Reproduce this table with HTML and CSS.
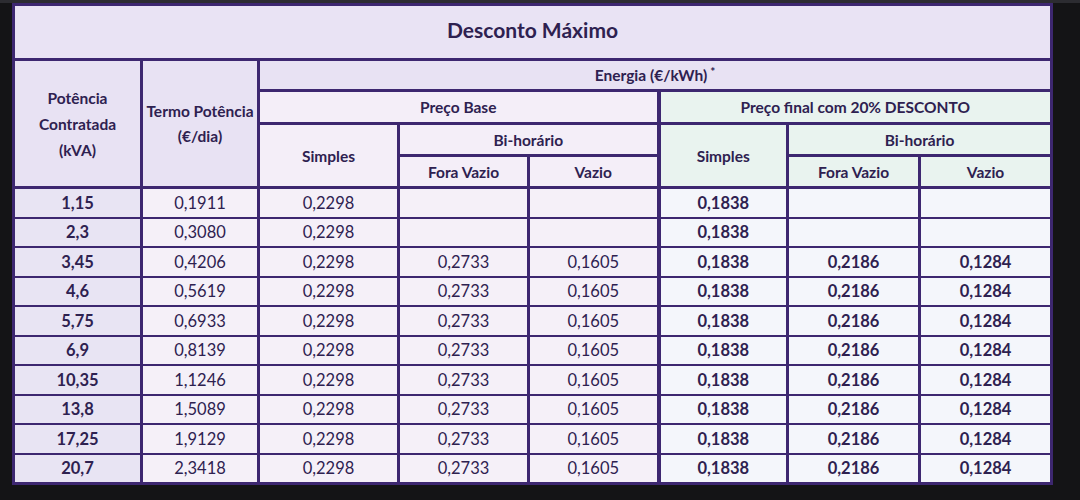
FILE: index.html
```html
<!DOCTYPE html>
<html lang="pt">
<head>
<meta charset="utf-8">
<title>Desconto Máximo</title>
<link rel="stylesheet" href="styles.css">
</head>
<body>
<div class="topband"></div>
<table class="tarifa">
  <colgroup>
    <col class="c1"><col class="c2"><col class="c3"><col class="c4"><col class="c5"><col class="c6"><col class="c7"><col class="c8">
  </colgroup>
  <thead>
    <tr class="r-title"><th colspan="8" class="title">Desconto Máximo</th></tr>
    <tr class="r-energia">
      <th rowspan="5" class="hd-lav hd-multi">Potência<br>Contratada<br>(kVA)</th>
      <th rowspan="5" class="hd-lav hd-termo">Termo Potência<br>(€/dia)</th>
      <th colspan="6" class="hd-lav">Energia (€/kWh)<sup>*</sup></th>
    </tr>
    <tr class="r-preco">
      <th colspan="3" class="hd-pink">Preço Base</th>
      <th colspan="3" class="hd-green sep">Preço final com 20% DESCONTO</th>
    </tr>
    <tr class="r-bi">
      <th rowspan="2" class="hd-pink">Simples</th>
      <th colspan="2" class="hd-pink">Bi-horário</th>
      <th rowspan="2" class="hd-green sep">Simples</th>
      <th colspan="2" class="hd-green">Bi-horário</th>
    </tr>
    <tr class="r-sub">
      <th class="hd-pink">Fora Vazio</th>
      <th class="hd-pink">Vazio</th>
      <th class="hd-green">Fora Vazio</th>
      <th class="hd-green">Vazio</th>
    </tr>
    <tr class="r-spacer"></tr>
  </thead>
  <tbody>
    <tr><td class="kva">1,15</td><td>0,1911</td><td>0,2298</td><td></td><td></td><td class="fin sep">0,1838</td><td class="fin"></td><td class="fin"></td></tr>
    <tr><td class="kva">2,3</td><td>0,3080</td><td>0,2298</td><td></td><td></td><td class="fin sep">0,1838</td><td class="fin"></td><td class="fin"></td></tr>
    <tr><td class="kva">3,45</td><td>0,4206</td><td>0,2298</td><td>0,2733</td><td>0,1605</td><td class="fin sep">0,1838</td><td class="fin">0,2186</td><td class="fin">0,1284</td></tr>
    <tr><td class="kva">4,6</td><td>0,5619</td><td>0,2298</td><td>0,2733</td><td>0,1605</td><td class="fin sep">0,1838</td><td class="fin">0,2186</td><td class="fin">0,1284</td></tr>
    <tr><td class="kva">5,75</td><td>0,6933</td><td>0,2298</td><td>0,2733</td><td>0,1605</td><td class="fin sep">0,1838</td><td class="fin">0,2186</td><td class="fin">0,1284</td></tr>
    <tr><td class="kva">6,9</td><td>0,8139</td><td>0,2298</td><td>0,2733</td><td>0,1605</td><td class="fin sep">0,1838</td><td class="fin">0,2186</td><td class="fin">0,1284</td></tr>
    <tr><td class="kva">10,35</td><td>1,1246</td><td>0,2298</td><td>0,2733</td><td>0,1605</td><td class="fin sep">0,1838</td><td class="fin">0,2186</td><td class="fin">0,1284</td></tr>
    <tr><td class="kva">13,8</td><td>1,5089</td><td>0,2298</td><td>0,2733</td><td>0,1605</td><td class="fin sep">0,1838</td><td class="fin">0,2186</td><td class="fin">0,1284</td></tr>
    <tr><td class="kva">17,25</td><td>1,9129</td><td>0,2298</td><td>0,2733</td><td>0,1605</td><td class="fin sep">0,1838</td><td class="fin">0,2186</td><td class="fin">0,1284</td></tr>
    <tr><td class="kva">20,7</td><td>2,3418</td><td>0,2298</td><td>0,2733</td><td>0,1605</td><td class="fin sep">0,1838</td><td class="fin">0,2186</td><td class="fin">0,1284</td></tr>
  </tbody>
</table>
</body>
</html>
```
FILE: styles.css
```css
html, body {
  margin: 0;
  padding: 0;
  background: #141416;
  height: 100%;
}
body {
  font-family: Lato, "Noto Sans", sans-serif;
  color: #2e2150;
}
.topband {
  height: 3px;
  background: #2c2c31;
}
.tarifa {
  margin-left: 12px;
  width: 1041px;
  border-collapse: collapse;
  table-layout: fixed;
  border: 3px solid #3d2770;
}
.c1 { width: 128px; }
.c2 { width: 117px; }
.c3 { width: 140px; }
.c4 { width: 130px; }
.c5 { width: 130px; }
.c6 { width: 129px; }
.c7 { width: 132px; }
.c8 { width: 132px; }

.tarifa th, .tarifa td {
  border: 3px solid #3d2770;
  padding: 0;
  text-align: center;
  vertical-align: middle;
}
.tarifa th {
  font-weight: 700;
  font-size: 15.5px;
}
.tarifa th.title {
  background: #e9e3f4;
  font-size: 21px;
  height: 47px;
  padding-bottom: 5px;
}
.r-energia th { height: 28px; }
.r-preco th { height: 30px; }
.r-bi th { height: 29px; }
.r-sub th { height: 29px; }
.r-spacer { height: 0; }

.hd-lav { background: #e8e2f3; }
.hd-pink { background: #f4eef8; }
.hd-green { background: #e9f3ef; }
.tarifa th.hd-multi { line-height: 26px; }
.tarifa th.hd-termo { line-height: 25px; }
.tarifa .sep { border-left-width: 4px; }

sup {
  font-size: 12px;
  vertical-align: 5px;
  margin-left: 3px;
  line-height: 0;
}

.tarifa td {
  border-top-width: 2px;
  border-bottom-width: 2px;
  height: 27.5px;
  font-size: 16.5px;
  background: #f5f0f8;
  font-weight: 400;
}
.tarifa td.kva {
  background: #e8e4f3;
  font-weight: 700;
}
.tarifa td.fin {
  background: #f4f6fb;
  font-weight: 700;
}
```
